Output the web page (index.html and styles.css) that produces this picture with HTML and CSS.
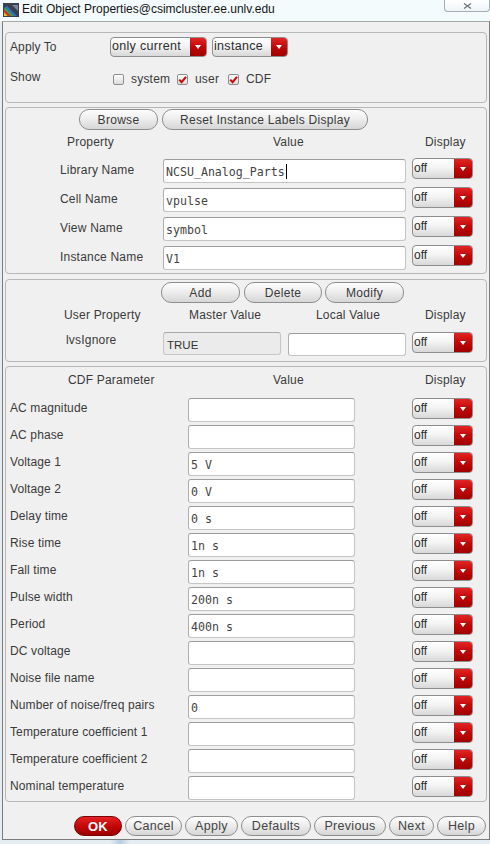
FILE: index.html
```html
<!DOCTYPE html>
<html>
<head>
<meta charset="utf-8">
<title>Edit Object Properties</title>
<link rel="stylesheet" href="styles.css">
</head>
<body>
<div class="titlebar">
  <svg class="appicon" viewBox="0 0 16 14" width="16" height="14">
    <rect x="0" y="0" width="16" height="14" fill="#3b414c"/>
    <polygon points="1,13 1,9 5,13" fill="#e6c31e"/>
    <polygon points="1,9 1,6 8,13 5,13" fill="#d8322e"/>
    <polygon points="1,6 2,4 11,13 8,13" fill="#3aa845"/>
    <polygon points="2,4 4,3 14,13 11,13" fill="#2f6fd0"/>
    <polygon points="9,2 15,2 15,8" fill="#7a8496"/>
  </svg>
  <span class="title">Edit Object Properties@csimcluster.ee.unlv.edu</span>
  <div class="closebtn">
    <svg viewBox="0 0 9 6" width="9" height="6"><path d="M1 0.5 L8 5.5 M8 0.5 L1 5.5" stroke="#6a6f75" stroke-width="1.1" fill="none"/></svg>
  </div>
</div>

<div class="window">
  <section class="group g-apply">
    <div class="arow">
      <span class="lbl w-apply">Apply To</span>
      <div class="combo w-only"><span class="ctext">only current</span><span class="carrow"></span></div>
      <div class="combo w-inst"><span class="ctext">instance</span><span class="carrow"></span></div>
    </div>
    <div class="srow">
      <span class="lbl w-show">Show</span>
      <span class="citem ci-sys"><span class="chk"></span><span class="ctx">system</span></span>
      <span class="citem ci-user"><span class="chk"><svg viewBox="0 0 11 11" width="11" height="11"><path d="M2.2 5.6 L4.6 8.2 L9 2.8" stroke="#c40d0d" stroke-width="2.1" fill="none"/></svg></span><span class="ctx">user</span></span>
      <span class="citem ci-cdf"><span class="chk"><svg viewBox="0 0 11 11" width="11" height="11"><path d="M2.2 5.6 L4.6 8.2 L9 2.8" stroke="#c40d0d" stroke-width="2.1" fill="none"/></svg></span><span class="ctx">CDF</span></span>
    </div>
  </section>

  <section class="group g-inst">
    <div class="btnrow b2">
      <button class="btn w-browse">Browse</button>
      <button class="btn w-reset">Reset Instance Labels Display</button>
    </div>
    <div class="hdr hdr2">
      <span class="hc h2a">Property</span>
      <span class="hc h2b">Value</span>
      <span class="hc">Display</span>
    </div>
    <div class="prow">
      <span class="plabel">Library Name</span>
      <div class="field pfield">NCSU_Analog_Parts<span class="caret"></span></div>
      <div class="combo w-off pcombo"><span class="ctext">off</span><span class="carrow"></span></div>
    </div>
    <div class="prow">
      <span class="plabel">Cell Name</span>
      <div class="field pfield">vpulse</div>
      <div class="combo w-off pcombo"><span class="ctext">off</span><span class="carrow"></span></div>
    </div>
    <div class="prow">
      <span class="plabel">View Name</span>
      <div class="field pfield">symbol</div>
      <div class="combo w-off pcombo"><span class="ctext">off</span><span class="carrow"></span></div>
    </div>
    <div class="prow">
      <span class="plabel">Instance Name</span>
      <div class="field pfield">V1</div>
      <div class="combo w-off pcombo"><span class="ctext">off</span><span class="carrow"></span></div>
    </div>
  </section>

  <section class="group g-user">
    <div class="btnrow b3">
      <button class="btn w-add">Add</button>
      <button class="btn w-del">Delete</button>
      <button class="btn w-mod">Modify</button>
    </div>
    <div class="hdr hdr3">
      <span class="hc h3a">User Property</span>
      <span class="hc h3b">Master Value</span>
      <span class="hc h3c">Local Value</span>
      <span class="hc">Display</span>
    </div>
    <div class="urow">
      <span class="ulabel">lvsIgnore</span>
      <div class="master">TRUE</div>
      <div class="field local"></div>
      <div class="combo w-off ucombo"><span class="ctext">off</span><span class="carrow"></span></div>
    </div>
  </section>

  <section class="group g-cdf">
    <div class="hdr hdr4">
      <span class="hc h4a">CDF Parameter</span>
      <span class="hc h4b">Value</span>
      <span class="hc">Display</span>
    </div>
    <div class="crow"><span class="clabel">AC magnitude</span><div class="field cfield"></div><div class="combo w-off ccombo"><span class="ctext">off</span><span class="carrow"></span></div></div>
    <div class="crow"><span class="clabel">AC phase</span><div class="field cfield"></div><div class="combo w-off ccombo"><span class="ctext">off</span><span class="carrow"></span></div></div>
    <div class="crow"><span class="clabel">Voltage 1</span><div class="field cfield">5 V</div><div class="combo w-off ccombo"><span class="ctext">off</span><span class="carrow"></span></div></div>
    <div class="crow"><span class="clabel">Voltage 2</span><div class="field cfield">0 V</div><div class="combo w-off ccombo"><span class="ctext">off</span><span class="carrow"></span></div></div>
    <div class="crow"><span class="clabel">Delay time</span><div class="field cfield">0 s</div><div class="combo w-off ccombo"><span class="ctext">off</span><span class="carrow"></span></div></div>
    <div class="crow"><span class="clabel">Rise time</span><div class="field cfield">1n s</div><div class="combo w-off ccombo"><span class="ctext">off</span><span class="carrow"></span></div></div>
    <div class="crow"><span class="clabel">Fall time</span><div class="field cfield">1n s</div><div class="combo w-off ccombo"><span class="ctext">off</span><span class="carrow"></span></div></div>
    <div class="crow"><span class="clabel">Pulse width</span><div class="field cfield">200n s</div><div class="combo w-off ccombo"><span class="ctext">off</span><span class="carrow"></span></div></div>
    <div class="crow"><span class="clabel">Period</span><div class="field cfield">400n s</div><div class="combo w-off ccombo"><span class="ctext">off</span><span class="carrow"></span></div></div>
    <div class="crow"><span class="clabel">DC voltage</span><div class="field cfield"></div><div class="combo w-off ccombo"><span class="ctext">off</span><span class="carrow"></span></div></div>
    <div class="crow"><span class="clabel">Noise file name</span><div class="field cfield"></div><div class="combo w-off ccombo"><span class="ctext">off</span><span class="carrow"></span></div></div>
    <div class="crow"><span class="clabel">Number of noise/freq pairs</span><div class="field cfield">0</div><div class="combo w-off ccombo"><span class="ctext">off</span><span class="carrow"></span></div></div>
    <div class="crow"><span class="clabel">Temperature coefficient 1</span><div class="field cfield"></div><div class="combo w-off ccombo"><span class="ctext">off</span><span class="carrow"></span></div></div>
    <div class="crow"><span class="clabel">Temperature coefficient 2</span><div class="field cfield"></div><div class="combo w-off ccombo"><span class="ctext">off</span><span class="carrow"></span></div></div>
    <div class="crow"><span class="clabel">Nominal temperature</span><div class="field cfield"></div><div class="combo w-off ccombo"><span class="ctext">off</span><span class="carrow"></span></div></div>
  </section>

  <div class="actions">
    <button class="btn ok w-ok">OK</button>
    <button class="btn w-cancel">Cancel</button>
    <button class="btn w-apply-b">Apply</button>
    <button class="btn w-defaults">Defaults</button>
    <button class="btn w-prev">Previous</button>
    <button class="btn w-next">Next</button>
    <button class="btn w-help">Help</button>
  </div>
</div>
</body>
</html>
```

FILE: styles.css
```css
* { box-sizing: border-box; }
html, body { margin: 0; padding: 0; }
body {
  width: 490px;
  height: 844px;
  overflow: hidden;
  background: linear-gradient(90deg, #e4edf2 0, #e4edf2 110px, #b9cde0 120px, #e4edf2 130px, #e4edf2 100%);
  font-family: "Liberation Sans", Arial, sans-serif;
  font-size: 12px;
  color: #3a3a3a;
}

/* title bar */
.titlebar {
  height: 21px;
  display: flex;
  align-items: flex-start;
  background: #f3fbfd;
}
.appicon { margin: 3px 0 0 3px; flex: none; }
.title {
  margin: 1px 0 0 3px;
  line-height: 16px;
  font-size: 12px;
  color: #151515;
  font-family: "Liberation Sans", Arial, sans-serif;
}
.closebtn {
  margin-left: auto;
  width: 46px;
  height: 12px;
  border: 1px solid #a3adb6;
  border-top: none;
  border-radius: 0 0 4px 4px;
  background: linear-gradient(#ffffff, #eef4f7);
  display: flex;
  align-items: center;
  justify-content: center;
}

/* window */
.window {
  margin: 0 0 0 2px;
  border: 1px solid #7b7b7b;
  border-top-color: #a8a8a8;
  background: #f0f0f0;
  padding: 10px 2px 3px 2px;
}
.group {
  border: 1px solid #b7b7b7;
  border-radius: 4px;
  background: #f0f0f0;
}

/* apply section */
.g-apply { height: 71px; padding: 4px 0 0 4px; margin-bottom: 4px; }
.arow { display: flex; align-items: center; height: 20px; }
.lbl { line-height: 16px; letter-spacing: 0.1px; }
.w-apply { width: 100px; }
.srow { display: flex; align-items: flex-start; height: 20px; margin-top: 12px; }
.w-show { width: 103px; margin-top: 0; }
.citem { display: flex; align-items: center; height: 20px; }
.ci-sys { width: 64px; }
.ci-user { width: 51px; }
.chk {
  width: 11px; height: 11px;
  border: 1px solid #8d8d8d;
  border-radius: 2px;
  background: linear-gradient(#fdfdfd, #dcdcdc);
  margin-right: 7px;
  display: flex;
  position: relative;
}
.chk svg { position: absolute; left: -1px; top: -1px; }
.ctx { letter-spacing: 0.2px; }

/* combo boxes */
.combo {
  display: flex;
  height: 21px;
  border: 1px solid #8e8e8e;
  border-radius: 4px;
  background: linear-gradient(#ffffff, #f4f4f4 45%, #d8d8d8);
  overflow: hidden;
  flex: none;
}
.ctext {
  flex: 1;
  padding: 0 0 2px 1px;
  display: flex;
  align-items: center;
  color: #2c2c2c;
  font-size: 12px;
}
.carrow {
  width: 16px;
  background: linear-gradient(#e22525, #c00808 50%, #a00000);
  display: flex;
  align-items: center;
  justify-content: center;
}
.carrow::after {
  content: "";
  border-left: 3px solid transparent;
  border-right: 3px solid transparent;
  border-top: 4px solid #ffffff;
}
.w-only { width: 97px; height: 20px; }
.w-inst { width: 76px; height: 20px; margin-left: 5px; }
.w-only .ctext, .w-inst .ctext { font-size: 12.5px; letter-spacing: 0.3px; }
.w-off { width: 61px; }
.w-off .carrow { width: 18px; }

/* buttons */
.btnrow { display: flex; height: 21px; }
.btn {
  height: 21px;
  padding: 0;
  border: 1px solid #8e8e8e;
  border-radius: 10px;
  background: linear-gradient(#fdfdfd, #eeeeee 45%, #d6d6d6);
  font-family: "Liberation Sans", Arial, sans-serif;
  font-size: 12px;
  letter-spacing: 0.3px;
  color: #3a3a3a;
  flex: none;
}
.b2 { margin: 1px 0 0 73px; gap: 4px; }
.w-browse { width: 79px; }
.w-reset { width: 206px; }
.b3 { margin: 2px 0 0 155px; }
.w-add { width: 79px; }
.w-del { width: 78px; margin-left: 4px; }
.w-mod { width: 79px; margin-left: 3px; }

/* headers */
.hdr { display: flex; white-space: nowrap; letter-spacing: 0.2px; color: #3a3a3a; }
.hc { flex: none; }
.hdr2 { height: 27px; line-height: 24px; }
.h2a { width: 267px; padding-left: 61px; }
.h2b { width: 152px; }
.hdr3 { height: 24px; line-height: 24px; }
.h3a { width: 183px; padding-left: 58px; }
.h3b { width: 127px; }
.h3c { width: 109px; }
.hdr4 { height: 29px; line-height: 26px; }
.h4a { width: 267px; padding-left: 62px; }
.h4b { width: 152px; }

/* input fields */
.field {
  flex: none;
  height: 24px;
  background: #ffffff;
  border: 1px solid #c4c4c4;
  border-top-color: #9c9c9c;
  border-left-color: #b0b0b0;
  border-radius: 3px;
  padding: 1px 0 0 2px;
  font-family: "DejaVu Sans Mono", "Liberation Mono", monospace;
  font-size: 11.6px;
  line-height: 18px;
  color: #444444;
  display: flex;
  align-items: center;
  white-space: nowrap;
}
.caret { display: inline-block; width: 1px; height: 15px; background: #000; margin-left: 1px; }

/* property rows */
.prow { display: flex; align-items: flex-start; height: 29px; }
.plabel { width: 157px; padding-left: 54px; margin-top: 5px; line-height: 16px; letter-spacing: 0.2px; flex: none; }
.pfield { width: 243px; margin-top: 2px; }
.pcombo { margin: 1px 0 0 6px; }

/* user property row */
.g-user { padding-bottom: 4px; margin-bottom: 4px; }
.g-inst { margin-bottom: 5px; }
.urow { display: flex; align-items: flex-start; height: 30px; }
.ulabel { width: 157px; padding-left: 60px; margin-top: 5px; line-height: 16px; letter-spacing: 0.2px; flex: none; }
.master {
  flex: none;
  width: 118px; height: 23px; margin-top: 5px;
  background: #ebebeb;
  border: 1px solid #c6c6c6;
  border-top-color: #a8a8a8;
  border-radius: 3px;
  padding: 4px 0 0 3px;
  font-size: 11.5px;
  line-height: 16px;
  color: #333;
}
.local { width: 118px; height: 23px; margin: 6px 0 0 7px; }
.ucombo { margin: 5px 0 0 6px; }

/* CDF rows */
.crow { display: flex; align-items: flex-start; height: 27px; }
.clabel { width: 182px; padding-left: 4px; margin-top: 4px; line-height: 16px; letter-spacing: 0.12px; flex: none; white-space: nowrap; }
.cfield { width: 167px; margin-top: 2px; }
.ccombo { margin: 2px 0 0 57px; }

/* bottom actions */
.actions {
  display: flex;
  justify-content: flex-end;
  gap: 3px;
  margin: 14px 1px 0 0;
  height: 20px;
}
.actions .btn { height: 20px; font-size: 12.5px; color: #444; }
.btn.ok {
  background: linear-gradient(#e42323, #c40606 50%, #9e0000);
  border-color: #7d0000;
  color: #ffffff;
  font-weight: bold;
  font-size: 13px;
}
.w-ok { width: 48px; }
.w-cancel { width: 57px; }
.w-apply-b { width: 53px; }
.w-defaults { width: 70px; }
.w-prev { width: 72px; }
.w-next { width: 45px; }
.w-help { width: 49px; }
```
